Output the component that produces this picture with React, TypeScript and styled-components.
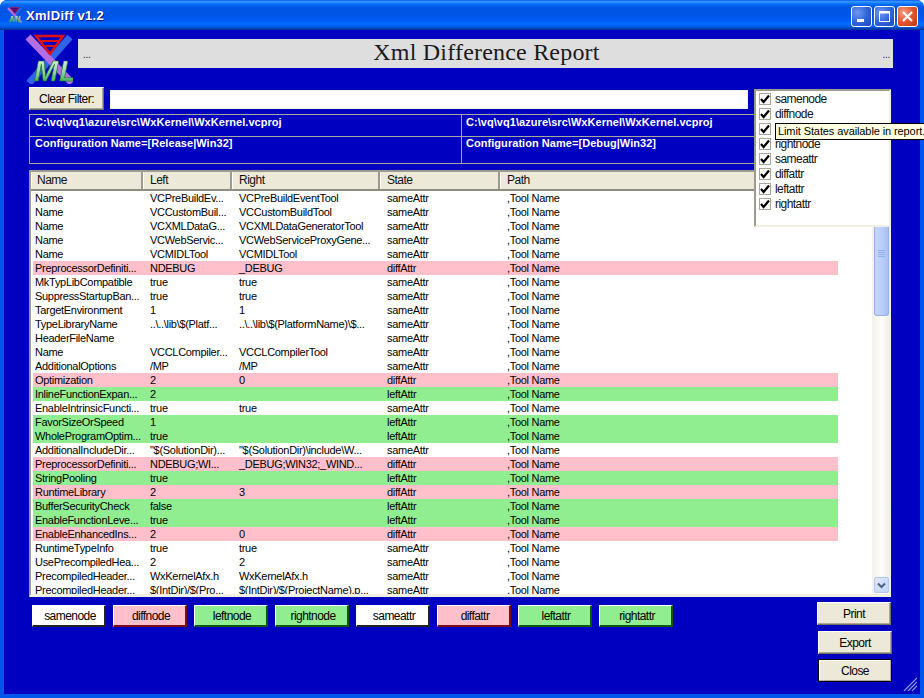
import React from "react";
import styled, { createGlobalStyle } from "styled-components";

const UI_FONT = `"Liberation Sans", Arial, sans-serif`;

const Global = createGlobalStyle`
  html, body { margin: 0; padding: 0; width: 924px; height: 698px; overflow: hidden; background: #fff; }
  * { box-sizing: border-box; }
`;

const Win = styled.div`
  width: 924px;
  height: 698px;
  display: flex;
  flex-direction: column;
  position: relative;
  overflow: hidden;
  font-family: ${UI_FONT};
  font-size: 11px;
  letter-spacing: -0.3px;
  color: #000;
  border-radius: 7px 7px 0 0;
  background: #0055ea;
`;

const TitleBar = styled.div`
  height: 30px;
  flex: none;
  display: flex;
  align-items: center;
  padding: 0 6px 0 7px;
  background: linear-gradient(180deg, #0058ee 0%, #3593ff 5%, #288eff 8%, #127dff 11%, #036ffc 14%, #0262ee 18%, #0057e5 24%, #0054e3 30%, #0055eb 58%, #005bf5 68%, #026afe 78%, #0062ef 86%, #0052d6 92%, #0040ab 96%, #003092 100%);
`;

const TitleText = styled.div`
  margin-left: 4px;
  flex: 1;
  color: #fff;
  font: bold 13px ${UI_FONT};
  letter-spacing: 0.3px;
  text-shadow: 1px 1px #0f1089;
`;

const WinButtons = styled.div`
  display: flex;
  gap: 2px;
  margin-top: 2px;
`;

const WinButton = styled.div<{ $close?: boolean }>`
  width: 21px;
  height: 21px;
  border: 1px solid #fff;
  border-radius: 3px;
  display: flex;
  align-items: center;
  justify-content: center;
  background: ${(p) =>
    p.$close
      ? "radial-gradient(circle at 30% 30%, #f0a080 0%, #e0552f 50%, #c3330f 100%)"
      : "radial-gradient(circle at 30% 30%, #6d97f0 0%, #2d62dc 55%, #1c46c0 100%)"};
`;

const Client = styled.div`
  position: relative;
  flex: 1;
  margin: 0 4px 4px;
  padding: 0 29px 0 25px;
  background: #0000c0;
  display: flex;
  flex-direction: column;
`;

const TopRow = styled.div`
  display: flex;
  height: 53px;
  margin: 4px -2px 0 -4px;
`;

const LogoBox = styled.div`
  width: 53px;
  flex: none;
`;

const Banner = styled.div`
  flex: 1;
  height: 29px;
  margin-top: 5px;
  background: #dedede;
  display: flex;
  align-items: center;
  justify-content: space-between;
  padding: 0 3px 0 5px;
  color: #222;
`;

const Dots = styled.span`
  align-self: flex-end;
  line-height: 13px;
  margin-bottom: 7px;
  font-size: 10px;
`;

const BannerTitle = styled.span`
  font-family: "Liberation Serif", serif;
  font-size: 24px;
  letter-spacing: 0.2px;
  color: #1a1a1a;
  margin-bottom: 2px;
`;

const RaisedButton = styled.button<{ $narrow?: boolean }>`
  width: ${(p) => (p.$narrow ? 74 : 75)}px;
  height: 23px;
  padding: 0;
  background: #ece9d8;
  font-family: ${UI_FONT};
  font-size: 12px;
  letter-spacing: -0.55px;
  color: #000;
  border: 1px solid;
  border-color: #fff #716f64 #716f64 #fff;
  box-shadow: inset -1px -1px #aca899;
`;

const FilterRow = styled.div`
  display: flex;
  height: 23px;
  gap: 6px;
`;

const FilterInput = styled.div`
  width: 638px;
  height: 19px;
  margin-top: 3px;
  background: #fff;
  border: 1px solid #f3f1e6;
`;

const InfoGrid = styled.div`
  height: 50px;
  margin-top: 4px;
  display: grid;
  grid-template-columns: 431px 1fr;
  grid-template-rows: 21px 1fr;
  border: 1px solid #a8a89c;
`;

const InfoCell = styled.div<{ $right?: boolean; $bottom?: boolean }>`
  padding: ${(p) => (p.$bottom ? 0 : 1)}px 4px 0 ${(p) => (p.$right ? 4 : 5)}px;
  color: #fff;
  font-weight: bold;
  font-size: 11px;
  letter-spacing: 0.05px;
  white-space: nowrap;
  overflow: hidden;
  line-height: 13px;
  border-left: ${(p) => (p.$right ? "1px solid #a8a89c" : "0")};
  border-top: ${(p) => (p.$bottom ? "1px solid #a8a89c" : "0")};
`;

const Table = styled.div`
  height: 427px;
  margin-top: 6px;
  display: flex;
  flex-direction: column;
  background: #fff;
  border-style: solid;
  border-width: 2px 2px 3px 2px;
  border-color: #9d9b8f #f1efe2 #f1efe2 #9d9b8f;
`;

const HeaderRow = styled.div`
  height: 19px;
  flex: none;
  display: grid;
  grid-template-columns: 112px 89px 148px 120px 1fr;
  background: #ece9d8;
  border-bottom: 2px solid #8f8d80;
`;

const HeaderCell = styled.div`
  padding-left: 6px;
  font-size: 12px;
  letter-spacing: -0.5px;
  line-height: 16px;
  color: #111;
  border-left: 1px solid #fff;
  border-right: 2px solid #9d9b8f;
  &:first-child { padding-left: 5px; }
  &:last-child { border-right: 0; }
`;

const Body = styled.div`
  flex: 1;
  min-height: 0;
  display: flex;
`;

const Rows = styled.div`
  flex: 1;
  padding-left: 2px;
  padding-right: 34px;
  overflow: hidden;
`;

const ROW_BG: Record<string, string> = {
  sameAttr: "#ffffff",
  diffAttr: "#ffc0cb",
  leftAttr: "#90ee90",
};

const Row = styled.div<{ $state: string }>`
  height: 14px;
  display: grid;
  grid-template-columns: 110px 89px 148px 120px 1fr;
  line-height: 14px;
  background: ${(p) => ROW_BG[p.$state]};
`;

const Cell = styled.div`
  padding-left: 7px;
  white-space: nowrap;
  overflow: hidden;
  color: #000;
  &:first-child { padding-left: 2px; }
`;

const Scrollbar = styled.div`
  width: 17px;
  flex: none;
  display: flex;
  flex-direction: column;
  align-items: flex-end;
  background: linear-gradient(90deg, #f3f1ec 0%, #fdfdfa 60%, #f1efe6 100%);
`;

const Thumb = styled.div`
  width: 15px;
  height: 125px;
  display: flex;
  flex-direction: column;
  align-items: center;
  justify-content: center;
  gap: 1px;
  background: linear-gradient(90deg, #c6d5fc 0%, #b9ccfb 60%, #a9bff5 100%);
  border: 1px solid #98b1e4;
  border-top: 0;
  border-radius: 0 0 3px 3px;
`;

const Grip = styled.div`
  width: 7px;
  height: 1px;
  background: #8fb0f4;
`;

const TrackFill = styled.div`
  flex: 1;
`;

const ScrollArrow = styled.div`
  width: 15px;
  height: 16px;
  margin-bottom: 1px;
  background: linear-gradient(135deg, #dfe8fd 0%, #c2d3fb 100%);
  border: 1px solid #b4c7f2;
  border-radius: 2px;
  display: flex;
  align-items: center;
  justify-content: center;
`;

const BottomArea = styled.div`
  margin-top: 5px;
  display: flex;
  justify-content: space-between;
  align-items: flex-start;
`;

const Legend = styled.div`
  display: flex;
  gap: 7px;
  margin: 3px 0 0 3px;
`;

const LEGEND: Record<string, [string, string]> = {
  same: ["#ffffff", "#222222"],
  diff: ["#ffc0cb", "#7a0a1c"],
  side: ["#90ee90", "#0a5a0a"],
};

const LegendButton = styled.div<{ $kind: string }>`
  width: 74px;
  height: 22px;
  padding-left: 3px;
  display: flex;
  align-items: center;
  justify-content: center;
  font-size: 12px;
  letter-spacing: -0.55px;
  background: ${(p) => LEGEND[p.$kind][0]};
  border-style: solid;
  border-width: 1px 2px 2px 1px;
  border-color: #fff ${(p) => LEGEND[p.$kind][1]} ${(p) => LEGEND[p.$kind][1]} #fff;
`;

const Actions = styled.div`
  display: flex;
  flex-direction: column;
  align-items: flex-end;
  gap: 6px;
  margin-right: -1px;
`;

const ActionButton = styled(RaisedButton)<{ $nudge?: number; $default?: boolean }>`
  margin-right: ${(p) => p.$nudge ?? 0}px;
  ${(p) =>
    p.$default
      ? "margin-top: -1px; border: 1px solid #000; box-shadow: inset -1px -1px #aca899, inset 1px 1px #fff;"
      : ""}
`;

const StatePanel = styled.div`
  position: absolute;
  left: 750px;
  top: 59px;
  width: 137px;
  height: 138px;
  padding: 0 0 0 3px;
  background: #fff;
  border-style: solid;
  border-width: 2px;
  border-color: #9d9b8f #f1efe2 #f1efe2 #9d9b8f;
  z-index: 2;
`;

const StateRow = styled.div`
  display: flex;
  align-items: center;
  height: 15px;
  gap: 4px;
  font-size: 12px;
  letter-spacing: -0.55px;
  color: #111;
`;

const CheckBox = styled.div`
  width: 12px;
  height: 12px;
  flex: none;
  background: #fff;
  border: 1px solid #a8a698;
  display: flex;
  align-items: center;
  justify-content: center;
`;

const Tooltip = styled.div`
  position: absolute;
  left: 775px;
  top: 123px;
  width: 175px;
  height: 17px;
  padding: 0 2px;
  background: #ffffe1;
  border: 1px solid #000;
  color: #000;
  font-size: 11px;
  letter-spacing: -0.1px;
  line-height: 15px;
  white-space: nowrap;
  z-index: 3;
`;

const ResizeGrip = styled.svg`
  position: absolute;
  right: 3px;
  bottom: 3px;
  z-index: 1;
`;

const Logo = ({ w, h, blur }: { w: number; h: number; blur?: number }) => (
  <svg width={w} height={h} viewBox="0 0 48 50" style={{ display: "block", filter: blur ? `blur(${blur}px)` : undefined }}>
    <defs>
      <linearGradient id={`ml${w}`} x1="0" y1="0" x2="0" y2="1">
        <stop offset="0" stopColor="#f2f8f2" />
        <stop offset="0.5" stopColor="#9fd4a8" />
        <stop offset="1" stopColor="#12a238" />
      </linearGradient>
    </defs>
    <line x1="45" y1="3" x2="4" y2="49" stroke="#2f63e8" strokeWidth="7" />
    <line x1="3" y1="3" x2="47" y2="49" stroke="#b26ee2" strokeWidth="7" />
    <polygon points="11,2 38,2 25,20" fill="#0000c0" stroke="#e01010" strokeWidth="2.5" />
    <line x1="15" y1="7" x2="34" y2="7" stroke="#e01010" strokeWidth="2" />
    <line x1="19" y1="12" x2="30" y2="12" stroke="#e01010" strokeWidth="2" />
    <text x="9" y="47" fontFamily="Liberation Sans, sans-serif" fontWeight="bold" fontStyle="italic" fontSize="29" letterSpacing="1" stroke="#0a7a26" strokeWidth="0.6" fill={`url(#ml${w})`}>ML</text>
  </svg>
);

const Check = () => (
  <svg width="10" height="10" viewBox="0 0 10 10">
    <path d="M1 5 L3.6 8 L9 1.5" fill="none" stroke="#000" strokeWidth="2.2" />
  </svg>
);

const COLS: [string, string, string, string][] = [
  ["Name", "VCPreBuildEv...", "VCPreBuildEventTool", "sameAttr"],
  ["Name", "VCCustomBuil...", "VCCustomBuildTool", "sameAttr"],
  ["Name", "VCXMLDataG...", "VCXMLDataGeneratorTool", "sameAttr"],
  ["Name", "VCWebServic...", "VCWebServiceProxyGene...", "sameAttr"],
  ["Name", "VCMIDLTool", "VCMIDLTool", "sameAttr"],
  ["PreprocessorDefiniti...", "NDEBUG", "_DEBUG", "diffAttr"],
  ["MkTypLibCompatible", "true", "true", "sameAttr"],
  ["SuppressStartupBan...", "true", "true", "sameAttr"],
  ["TargetEnvironment", "1", "1", "sameAttr"],
  ["TypeLibraryName", "..\\..\\lib\\$(Platf...", "..\\..\\lib\\$(PlatformName)\\$...", "sameAttr"],
  ["HeaderFileName", "", "", "sameAttr"],
  ["Name", "VCCLCompiler...", "VCCLCompilerTool", "sameAttr"],
  ["AdditionalOptions", "/MP", "/MP", "sameAttr"],
  ["Optimization", "2", "0", "diffAttr"],
  ["InlineFunctionExpan...", "2", "", "leftAttr"],
  ["EnableIntrinsicFuncti...", "true", "true", "sameAttr"],
  ["FavorSizeOrSpeed", "1", "", "leftAttr"],
  ["WholeProgramOptim...", "true", "", "leftAttr"],
  ["AdditionalIncludeDir...", "\"$(SolutionDir)...", "\"$(SolutionDir)\\include\\W...", "sameAttr"],
  ["PreprocessorDefiniti...", "NDEBUG;WI...", "_DEBUG;WIN32;_WIND...", "diffAttr"],
  ["StringPooling", "true", "", "leftAttr"],
  ["RuntimeLibrary", "2", "3", "diffAttr"],
  ["BufferSecurityCheck", "false", "", "leftAttr"],
  ["EnableFunctionLeve...", "true", "", "leftAttr"],
  ["EnableEnhancedIns...", "2", "0", "diffAttr"],
  ["RuntimeTypeInfo", "true", "true", "sameAttr"],
  ["UsePrecompiledHea...", "2", "2", "sameAttr"],
  ["PrecompiledHeader...", "WxKernelAfx.h", "WxKernelAfx.h", "sameAttr"],
  ["PrecompiledHeader...", "$(IntDir)/$(Pro...", "$(IntDir)/$(ProjectName).p...", "sameAttr"],
];

const STATES = ["samenode", "diffnode", "leftnode", "rightnode", "sameattr", "diffattr", "leftattr", "rightattr"];
const KINDS = ["same", "diff", "side", "side", "same", "diff", "side", "side"];

export default function App() {
  return (
    <Win>
      <Global />
      <TitleBar>
        <Logo w={15} h={16} />
        <TitleText>XmlDiff v1.2</TitleText>
        <WinButtons>
          <WinButton>
            <svg width="13" height="13" viewBox="0 0 13 13"><rect x="2" y="9" width="7" height="3" fill="#fff" /></svg>
          </WinButton>
          <WinButton>
            <svg width="13" height="13" viewBox="0 0 13 13"><rect x="1.5" y="1.5" width="10" height="10" fill="none" stroke="#fff" /><rect x="1" y="1" width="11" height="2.5" fill="#fff" /></svg>
          </WinButton>
          <WinButton $close>
            <svg width="13" height="13" viewBox="0 0 13 13"><path d="M2 2 L11 11 M11 2 L2 11" stroke="#fff" strokeWidth="2.2" /></svg>
          </WinButton>
        </WinButtons>
      </TitleBar>
      <Client>
        <TopRow>
          <LogoBox>
            <Logo w={48} h={50} blur={0.5} />
          </LogoBox>
          <Banner>
            <Dots>...</Dots>
            <BannerTitle>Xml Difference Report</BannerTitle>
            <Dots>...</Dots>
          </Banner>
        </TopRow>
        <FilterRow>
          <RaisedButton>Clear Filter:</RaisedButton>
          <FilterInput />
        </FilterRow>
        <InfoGrid>
          <InfoCell>C:\vq\vq1\azure\src\WxKernel\WxKernel.vcproj</InfoCell>
          <InfoCell $right>C:\vq\vq1\azure\src\WxKernel\WxKernel.vcproj</InfoCell>
          <InfoCell $bottom>Configuration Name=[Release|Win32]</InfoCell>
          <InfoCell $bottom $right>Configuration Name=[Debug|Win32]</InfoCell>
        </InfoGrid>
        <Table>
          <HeaderRow>
            {["Name", "Left", "Right", "State", "Path"].map((h) => (
              <HeaderCell key={h}>{h}</HeaderCell>
            ))}
          </HeaderRow>
          <Body>
            <Rows>
              {COLS.map((r, i) => (
                <Row key={i} $state={r[3]}>
                  <Cell>{r[0]}</Cell>
                  <Cell>{r[1]}</Cell>
                  <Cell>{r[2]}</Cell>
                  <Cell>{r[3]}</Cell>
                  <Cell>,Tool Name</Cell>
                </Row>
              ))}
            </Rows>
            <Scrollbar>
              <Thumb>
                <Grip /><Grip /><Grip /><Grip />
              </Thumb>
              <TrackFill />
              <ScrollArrow>
                <svg width="9" height="7" viewBox="0 0 9 7"><path d="M1 1.5 L4.5 5 L8 1.5" fill="none" stroke="#4d6185" strokeWidth="2" /></svg>
              </ScrollArrow>
            </Scrollbar>
          </Body>
        </Table>
        <BottomArea>
          <Legend>
            {STATES.map((s, i) => (
              <LegendButton key={s} $kind={KINDS[i]}>{s}</LegendButton>
            ))}
          </Legend>
          <Actions>
            <ActionButton $narrow $nudge={1}>Print</ActionButton>
            <ActionButton $narrow>Export</ActionButton>
            <ActionButton $narrow $default>Close</ActionButton>
          </Actions>
        </BottomArea>
        <StatePanel>
          {STATES.map((s) => (
            <StateRow key={s}>
              <CheckBox><Check /></CheckBox>
              {s}
            </StateRow>
          ))}
        </StatePanel>
        <ResizeGrip width="14" height="14" viewBox="0 0 14 14">
          <path d="M14 1 L1 14 M14 5 L5 14 M14 9 L9 14" stroke="#8fa0d8" strokeWidth="1.2" />
        </ResizeGrip>
      </Client>
      <Tooltip>Limit States available in report.</Tooltip>
    </Win>
  );
}
